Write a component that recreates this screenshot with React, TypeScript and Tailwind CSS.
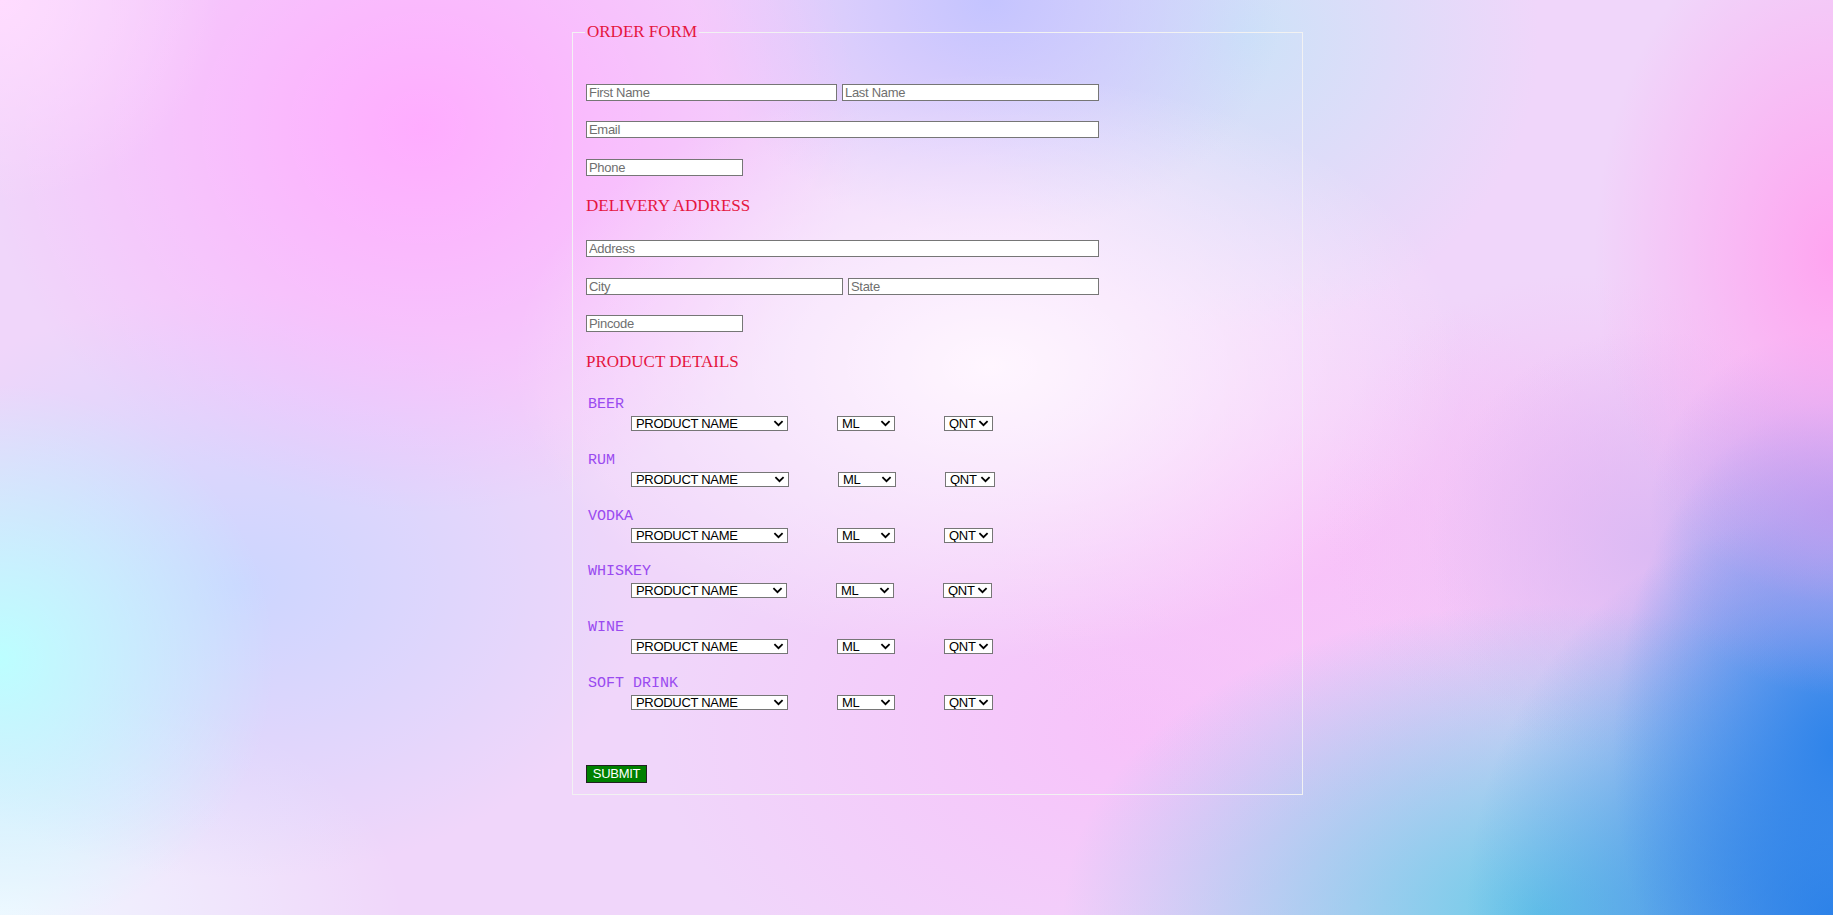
import React from "react";

type Row = { name: string; pw: string; qw: string; mt: string };

const rows: Row[] = [
  { name: "BEER", pw: "w-[157px]", qw: "w-[49px]", mt: "mt-[24px]" },
  { name: "RUM", pw: "w-[158px]", qw: "w-[50px]", mt: "mt-[21px]" },
  { name: "VODKA", pw: "w-[157px]", qw: "w-[49px]", mt: "mt-[21px]" },
  { name: "WHISKEY", pw: "w-[156px]", qw: "w-[49px]", mt: "mt-[20px]" },
  { name: "WINE", pw: "w-[157px]", qw: "w-[49px]", mt: "mt-[21px]" },
  { name: "SOFT DRINK", pw: "w-[157px]", qw: "w-[49px]", mt: "mt-[21px]" },
];

function Sel({ w, options }: { w: string; options: string[] }) {
  return (
    <div className={`relative block h-[15px] ${w}`}>
      <select className="block h-[15px] w-full appearance-none border border-[#767676] bg-white py-0 pl-[4px] pr-[14px] font-['Liberation_Sans',Arial,sans-serif] text-[13px] leading-[13px] tracking-[-0.3px] text-black outline-none">
        {options.map((o) => (
          <option key={o}>{o}</option>
        ))}
      </select>
      <svg
        className="pointer-events-none absolute right-[4px] top-[4px] block"
        width="11"
        height="7"
        viewBox="0 0 11 7"
      >
        <path d="M1.4 1.2 L5.5 5.2 L9.6 1.2" stroke="#000" strokeWidth="1.8" fill="none" />
      </svg>
    </div>
  );
}

function Field({ w, ph }: { w: string; ph: string }) {
  return (
    <input
      type="text"
      placeholder={ph}
      className={`block h-[17px] ${w} border border-[#767676] bg-white px-[2px] font-['Liberation_Sans',Arial,sans-serif] text-[13px] leading-[15px] tracking-[-0.3px] text-black outline-none placeholder:text-[#6f6f6f]`}
    />
  );
}

function Heading({ children }: { children: React.ReactNode }) {
  return (
    <div className="font-['Liberation_Serif','Times_New_Roman',serif] text-[17px] leading-[20px] text-[#e5163f]">
      {children}
    </div>
  );
}

export default function App() {
  return (
    <div className="min-h-screen w-full bg-[#f0d6fa] bg-[radial-gradient(26%_32%_at_54%_40%,#fff6ff_0%,#fff6ff00_100%),radial-gradient(12%_22%_at_0%_0%,#ffdcff_0%,#ffdcff00_100%),radial-gradient(24%_42%_at_23%_14%,#ffacff_0%,#ffacff00_100%),radial-gradient(16%_26%_at_54%_0%,#c4c4ff_0%,#c4c4ff00_100%),radial-gradient(16%_32%_at_68%_4%,#cde2f8_0%,#cde2f800_100%),radial-gradient(13%_38%_at_100%_28%,#ffa4f0_0%,#ffa4f000_100%),radial-gradient(10%_20%_at_100%_56%,#a49cf0_0%,#a49cf000_100%),radial-gradient(12%_38%_at_100%_82%,#2f84ea_0%,#2f84ea00_100%),radial-gradient(20%_44%_at_100%_100%,#2a80e6_0%,#2a80e600_100%),radial-gradient(26%_34%_at_84%_100%,#6ccbe8_0%,#6ccbe800_100%),radial-gradient(12%_24%_at_90%_60%,#dcbaf4_0%,#dcbaf400_100%),radial-gradient(14%_26%_at_86%_56%,#f4c0f6_0%,#f4c0f600_100%),radial-gradient(18%_30%_at_72%_60%,#f8c2f9_0%,#f8c2f900_100%),radial-gradient(15%_30%_at_0%_72%,#bcffff_0%,#bcffff00_100%),radial-gradient(22%_32%_at_13%_64%,#ccd6ff_0%,#ccd6ff00_100%),radial-gradient(26%_36%_at_62%_80%,#f7c2fa_0%,#f7c2fa00_100%),radial-gradient(22%_26%_at_0%_100%,#f0f8ff_0%,#f0f8ff00_100%)] pt-[22px]">
      <form onSubmit={(e) => e.preventDefault()}>
        <fieldset className="ml-[572px] w-[731px] border border-[#f2f2f2] pb-[11px] pl-[13px] pr-[12px]">
          <legend className="ml-[-1px] px-[2px] font-['Liberation_Serif','Times_New_Roman',serif] text-[17px] leading-[20px] text-[#e5163f]">
            ORDER FORM
          </legend>

          <div className="mt-[42px] flex gap-[5px]">
            <Field w="w-[251px]" ph="First Name" />
            <Field w="w-[257px]" ph="Last Name" />
          </div>
          <div className="mt-[20px]">
            <Field w="w-[513px]" ph="Email" />
          </div>
          <div className="mt-[21px]">
            <Field w="w-[157px]" ph="Phone" />
          </div>

          <div className="mt-[20px]">
            <Heading>DELIVERY ADDRESS</Heading>
          </div>
          <div className="mt-[24px]">
            <Field w="w-[513px]" ph="Address" />
          </div>
          <div className="mt-[21px] flex gap-[5px]">
            <Field w="w-[257px]" ph="City" />
            <Field w="w-[251px]" ph="State" />
          </div>
          <div className="mt-[20px]">
            <Field w="w-[157px]" ph="Pincode" />
          </div>

          <div className="mt-[20px]">
            <Heading>PRODUCT DETAILS</Heading>
          </div>

          {rows.map((r) => (
            <div key={r.name} className={r.mt}>
              <div className="ml-[2px] h-[17px] whitespace-pre font-['Liberation_Mono','Courier_New',monospace] text-[15px] leading-[17px] text-[#9a4af0]">
                {r.name}
              </div>
              <div className="mt-[3px] flex h-[15px] items-start pl-[45px]">
                <Sel w={r.pw} options={["PRODUCT NAME", "OPTION 1", "OPTION 2"]} />
                <div className="ml-[49px] block">
                  <Sel w="w-[58px]" options={["ML", "180", "375", "750"]} />
                </div>
                <div className="ml-[49px] block">
                  <Sel w={r.qw} options={["QNT", "1", "2", "3"]} />
                </div>
              </div>
            </div>
          ))}

          <div className="mt-[55px]">
            <button
              type="submit"
              className="flex h-[18px] w-[61px] items-center justify-center border border-[#222] bg-[#008000] font-['Liberation_Sans',Arial,sans-serif] text-[13px] leading-[16px] tracking-[-0.3px] text-white"
            >
              SUBMIT
            </button>
          </div>
        </fieldset>
      </form>
    </div>
  );
}
